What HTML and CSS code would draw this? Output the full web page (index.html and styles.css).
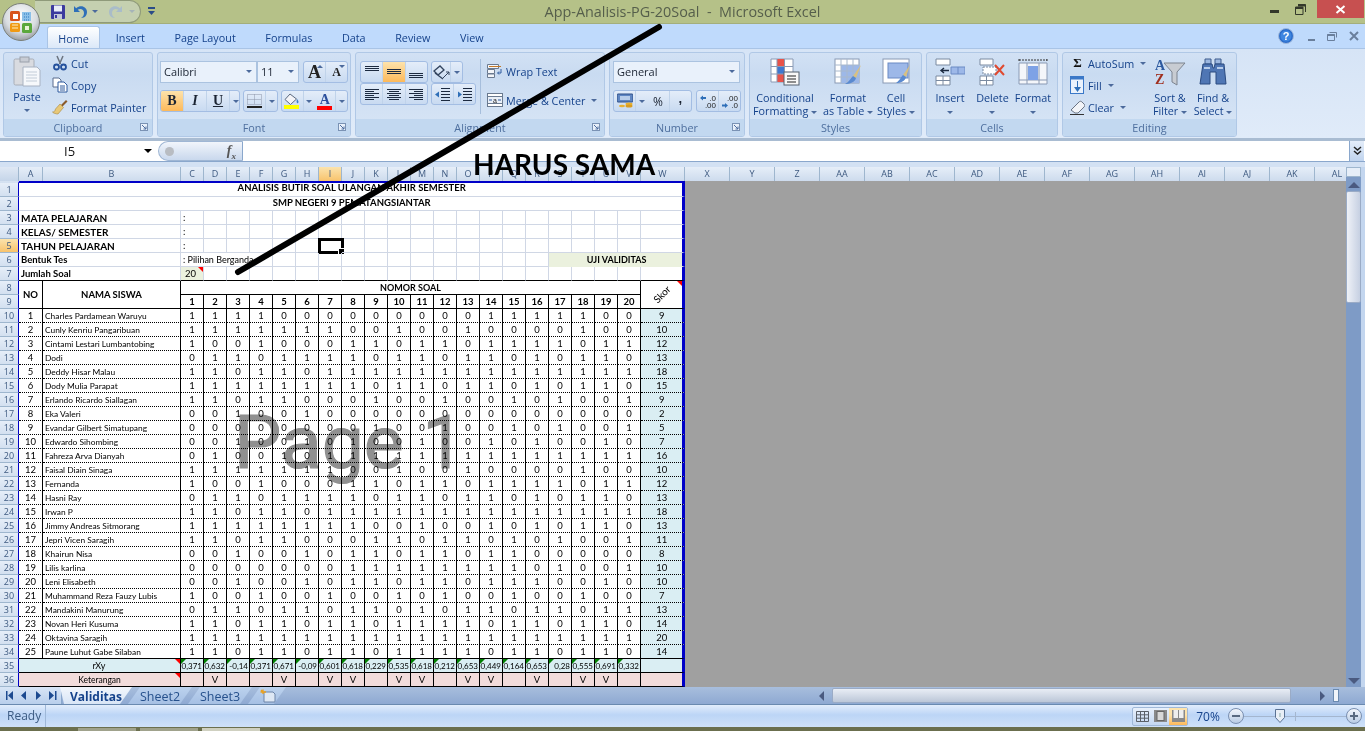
FILE: index.html
```html
<!DOCTYPE html>
<html lang="id">
<head>
    <meta charset="UTF-8">
    <title>App-Analisis-PG-20Soal - Microsoft Excel</title>
    <link rel="stylesheet" href="styles.css">
</head>
<body>
<div class="window">
    <!-- Title bar -->
    <div class="titlebar">
        <div class="qat">
            <svg class="qat-ic" width="16" height="16" viewBox="0 0 16 16"><rect x="1" y="1" width="14" height="14" rx="1" fill="#3c3a9e"/><rect x="4" y="1.500" width="8" height="6" fill="#e8ecf8"/><rect x="4" y="10" width="8" height="5" fill="#c4c8d8"/><rect x="5" y="11" width="2" height="3" fill="#3c3a9e"/></svg>
            <svg class="qat-ic undo" width="16" height="16" viewBox="0 0 16 16"><path d="M2 2v6h6L5.800 5.800C8 4 12 5 12 9c0 2-1 4-3 5 4 0 6-3 6-6C15 3 9 0 4.200 4.200z" fill="#2f6fb8"/></svg>
            <span class="caret qat-caret"></span>
            <svg class="qat-ic redo" width="16" height="16" viewBox="0 0 16 16"><path d="M14 2v6H8l2.200-2.200C8 4 4 5 4 9c0 2 1 4 3 5-4 0-6-3-6-6C1 3 7 0 11.800 4.200z" fill="#a9bcc9"/></svg>
            <span class="caret qat-caret grey"></span>
        </div>
        <svg class="qat-more" width="7" height="9" viewBox="0 0 7 9"><rect x="0" y="0" width="7" height="2" fill="#2a4c88"/><path d="M0 4h7L3.500 8z" fill="#2a4c88"/></svg>
        <div class="title-text">App-Analisis-PG-20Soal&nbsp; -&nbsp; Microsoft Excel</div>
        <div class="win-controls">
            <span class="win-min"></span>
            <svg class="win-restore" width="11" height="11" viewBox="0 0 11 11"><path d="M3 .5h7.500V8M.5 3h7.500v7.500H.5z" fill="none" stroke="#33382a"/><path d="M3 1.500h7.500M.5 4h7.500" stroke="#33382a" stroke-width="2"/></svg>
            <span class="win-close"><svg width="11" height="9" viewBox="0 0 11 9"><path d="M1.500 1l8 7M9.500 1l-8 7" stroke="#fff" stroke-width="2"/></svg></span>
        </div>
    </div>

    <!-- Ribbon tabs -->
    <div class="tabs">
        <div class="tab tab-home">Home</div>
        <div class="tab">Insert</div>
        <div class="tab">Page Layout</div>
        <div class="tab">Formulas</div>
        <div class="tab">Data</div>
        <div class="tab">Review</div>
        <div class="tab">View</div>
        <div class="tabs-right">
            <svg width="16" height="16" viewBox="0 0 16 16"><circle cx="8" cy="8" r="7.500" fill="#2d6ecb" stroke="#9fb8dc"/><circle cx="8" cy="8" r="5.500" fill="#3f86e0"/><text x="8" y="12" text-anchor="middle" class="help-q">?</text></svg>
            <span class="mini-min"></span>
            <svg width="10" height="9" viewBox="0 0 10 9"><path d="M2.500 .5h7v5M.5 2.500h7v6h-7z" fill="none" stroke="#6a7f9c"/><path d="M.5 3h7" stroke="#6a7f9c" stroke-width="2"/></svg>
            <svg width="10" height="10" viewBox="0 0 10 10"><path d="M1 1l8 8M9 1l-8 8" stroke="#6a7f9c" stroke-width="2"/></svg>
        </div>
    </div>

    <!-- Ribbon -->
    <div class="ribbon">
        <div class="group g-clip">
            <div class="group-body">
                <div class="paste">
                    <svg width="28" height="31" viewBox="0 0 28 31"><rect x="1" y="3" width="20" height="26" rx="1.500" fill="#d9dbe0" stroke="#a8aeb8"/><rect x="7" y="1" width="9" height="5" fill="#c8ccd4" stroke="#9aa0aa"/><path d="M10 11h14l3 3v16H10z" fill="#f6f8fb" stroke="#a8b2c2"/><path d="M13 16h11M13 19h11M13 22h11M13 25h11" stroke="#c2ccd8"/></svg>
                    <span class="paste-label">Paste</span>
                    <span class="caret"></span>
                </div>
                <div class="small-col">
                    <div class="small-row"><svg width="16" height="16" viewBox="0 0 16 16"><path d="M5 1l3.500 8M11 1L7.500 9" stroke="#6c7480" stroke-width="1.500" fill="none"/><circle cx="4.500" cy="12" r="2.500" fill="none" stroke="#24509c" stroke-width="1.800"/><circle cx="11.500" cy="12" r="2.500" fill="none" stroke="#24509c" stroke-width="1.800"/></svg><span>Cut</span></div>
                    <div class="small-row"><svg width="16" height="16" viewBox="0 0 16 16"><path d="M1 1h6l2 2v7H1z" fill="#fff" stroke="#5a6d8e"/><path d="M6 5h6l3 3v7H6z" fill="#fff" stroke="#2f5a9e"/><path d="M8 9h5M8 11h5M8 13h5" stroke="#2f5a9e"/></svg><span>Copy</span></div>
                    <div class="small-row"><svg width="16" height="16" viewBox="0 0 16 16"><path d="M9 6l5-5 1.500 1.500-5 5z" fill="#8a5a2a"/><path d="M8 5l3.500 3.500L6 15c-2 0-5-1-5.500-2 2 0 2.500-1 3-3z" fill="#e8c878" stroke="#a8883c" stroke-width=".6"/></svg><span>Format Painter</span></div>
                </div>
            </div>
            <div class="group-label">Clipboard<svg class="launcher" width="8" height="8" viewBox="0 0 8 8"><rect x=".5" y=".5" width="7" height="7" fill="#e8f0fa" stroke="#7a92b4"/><path d="M2 2l4 4M6 3.500V6H3.500" stroke="#4d6d9f" fill="none"/></svg></div>
        </div>

        <div class="group g-font">
            <div class="group-body rows">
                <div class="row">
                    <div class="select font-name">Calibri<span class="caret"></span></div>
                    <div class="select font-size">11<span class="caret"></span></div>
                    <div class="btn-group grow"><span class="btn big-a">A<i class="caret up"></i></span><span class="btn small-a">A<i class="caret"></i></span></div>
                </div>
                <div class="row">
                    <div class="btn-group biu"><span class="btn on ft-b">B</span><span class="btn ft-i">I</span><span class="btn ft-u">U</span><span class="btn tiny"><i class="caret"></i></span></div>
                    <div class="btn-group border-btn">
                        <span class="btn"><svg width="15" height="14" viewBox="0 0 15 14"><path d="M.5.500h14v10H.5zM7.500.5v10M.5 5.500h14" fill="none" stroke="#8a93a6" stroke-dasharray="1 1"/><rect y="12" width="15" height="2" fill="#222"/></svg></span><span class="btn tiny"><i class="caret"></i></span>
                    </div>
                    <div class="btn-group colors">
                        <span class="btn"><svg width="16" height="16" viewBox="0 0 16 16"><path d="M6 1L1 6.500 6.500 11.500 12.500 6z" fill="#f4f4f8" stroke="#5b6a80"/><path d="M13 6c1.500 2 2 3 1 4s-2-1-1-4z" fill="#3f7fc9"/><rect y="12" width="15" height="4" fill="#ffff00"/></svg></span><span class="btn tiny"><i class="caret"></i></span>
                        <span class="btn color-a">A<b></b></span><span class="btn tiny"><i class="caret"></i></span>
                    </div>
                </div>
            </div>
            <div class="group-label">Font<svg class="launcher" width="8" height="8" viewBox="0 0 8 8"><rect x=".5" y=".5" width="7" height="7" fill="#e8f0fa" stroke="#7a92b4"/><path d="M2 2l4 4M6 3.500V6H3.500" stroke="#4d6d9f" fill="none"/></svg></div>
        </div>

        <div class="group g-align">
            <div class="group-body">
                <div class="rows align-rows">
                    <div class="row">
                        <div class="btn-group third">
                            <span class="btn"><svg width="14" height="12" viewBox="0 0 14 12"><path d="M0 .5h14M0 2.500h14M0 4.500h14" stroke="#1c2a40"/></svg></span>
                            <span class="btn on"><svg width="14" height="12" viewBox="0 0 14 12"><path d="M0 3.500h14M0 5.500h14M0 7.500h14" stroke="#1c2a40"/></svg></span>
                            <span class="btn"><svg width="14" height="12" viewBox="0 0 14 12"><path d="M0 7.500h14M0 9.500h14M0 11.500h14" stroke="#1c2a40"/></svg></span>
                        </div>
                        <div class="btn-group orient">
                            <span class="btn"><svg width="17" height="15" viewBox="0 0 17 15"><path d="M1 6l6-5 4 4-6 5zM2 8l8 6" fill="none" stroke="#33445e" stroke-width="1.300"/><path d="M10 13l6-6M13 7h3v3" fill="none" stroke="#33445e"/></svg></span><span class="btn tiny"><i class="caret"></i></span>
                        </div>
                    </div>
                    <div class="row">
                        <div class="btn-group third">
                            <span class="btn"><svg width="14" height="11" viewBox="0 0 14 11"><path d="M0 .5h14M0 2.500h9M0 4.500h14M0 6.500h9M0 8.500h14M0 10.500h9" stroke="#1c2a40"/></svg></span>
                            <span class="btn"><svg width="14" height="11" viewBox="0 0 14 11"><path d="M0 .5h14M2 2.500h10M0 4.500h14M2 6.500h10M0 8.500h14M2 10.500h10" stroke="#1c2a40"/></svg></span>
                            <span class="btn"><svg width="14" height="11" viewBox="0 0 14 11"><path d="M0 .5h14M5 2.500h9M0 4.500h14M5 6.500h9M0 8.500h14M5 10.500h9" stroke="#1c2a40"/></svg></span>
                        </div>
                        <div class="btn-group indent">
                            <span class="btn"><svg width="16" height="13" viewBox="0 0 16 13"><path d="M6 .5h9M6 3.500h9M6 6.500h9M6 9.500h9M6 12.500h9" stroke="#1c2a40"/><path d="M0 6.500l4-3v6z" fill="#2f6fb8"/></svg></span>
                            <span class="btn"><svg width="16" height="13" viewBox="0 0 16 13"><path d="M6 .5h9M6 3.500h9M6 6.500h9M6 9.500h9M6 12.500h9" stroke="#1c2a40"/><path d="M5 6.500l-4-3v6z" fill="#2f6fb8"/></svg></span>
                        </div>
                    </div>
                </div>
                <div class="align-sep"></div>
                <div class="wrap-col">
                    <div class="small-row"><svg width="16" height="14" viewBox="0 0 16 14"><path d="M.5.500h11v4H.5zM.5 5.500h7v4h-7zM.5 10h7v3.500h-7z" fill="#f4f6fa" stroke="#6a7a90"/><path d="M2 2.500h12" stroke="#c47a2a"/><path d="M14 5v4h-3M12 7.500L10.500 9l1.500 1.500" fill="none" stroke="#2f5a9e"/></svg><span>Wrap Text</span></div>
                    <div class="small-row"><svg width="16" height="14" viewBox="0 0 16 14"><rect x=".5" y=".5" width="15" height="3" fill="#fff" stroke="#6a7a90"/><rect x=".5" y="10.500" width="15" height="3" fill="#fff" stroke="#6a7a90"/><rect x=".5" y="3.500" width="15" height="7" fill="#eaf0f8" stroke="#6a7a90"/><path d="M2 7h3M14 7h-3" stroke="#2f5a9e"/><text x="8" y="9.500" text-anchor="middle" class="merge-a">a</text></svg><span>Merge &amp; Center</span><i class="caret"></i></div>
                </div>
            </div>
            <div class="group-label">Alignment<svg class="launcher" width="8" height="8" viewBox="0 0 8 8"><rect x=".5" y=".5" width="7" height="7" fill="#e8f0fa" stroke="#7a92b4"/><path d="M2 2l4 4M6 3.500V6H3.500" stroke="#4d6d9f" fill="none"/></svg></div>
        </div>

        <div class="group g-number">
            <div class="group-body rows">
                <div class="row"><div class="select num-format">General<span class="caret"></span></div></div>
                <div class="row">
                    <div class="btn-group num-btns">
                        <span class="btn money"><svg width="16" height="16" viewBox="0 0 16 16"><rect y="1" width="16" height="8" rx="1" fill="#5f86c2" stroke="#2f4f88"/><rect x="3" y="3" width="10" height="4" fill="#b8cdea"/><ellipse cx="12" cy="11" rx="3.500" ry="1.500" fill="#e8b030"/><ellipse cx="12" cy="13" rx="3.500" ry="1.500" fill="#d89c20"/><ellipse cx="5" cy="13" rx="3" ry="1.300" fill="#e8b030"/></svg></span><span class="btn tiny"><i class="caret"></i></span>
                        <span class="btn pct">%</span><span class="btn comma">,</span>
                    </div>
                    <div class="btn-group dec-btns">
                        <span class="btn dec"><svg width="16" height="15" viewBox="0 0 16 15"><text x="16" y="7" text-anchor="end" class="dec-t">.0</text><text x="16" y="14" text-anchor="end" class="dec-t">.00</text><path d="M0 4l3-2.500V3h3v2H3v1.500z" fill="#2f6fb8"/></svg></span>
                        <span class="btn dec"><svg width="16" height="15" viewBox="0 0 16 15"><text x="16" y="7" text-anchor="end" class="dec-t">.00</text><text x="16" y="14" text-anchor="end" class="dec-t">.0</text><path d="M6 11.500l-3-2.500v1.500H0v2h3V14z" fill="#2f6fb8"/></svg></span>
                    </div>
                </div>
            </div>
            <div class="group-label">Number<svg class="launcher" width="8" height="8" viewBox="0 0 8 8"><rect x=".5" y=".5" width="7" height="7" fill="#e8f0fa" stroke="#7a92b4"/><path d="M2 2l4 4M6 3.500V6H3.500" stroke="#4d6d9f" fill="none"/></svg></div>
        </div>

        <div class="group g-styles">
            <div class="group-body">
                <div class="big w70">
                    <svg width="30" height="28" viewBox="0 0 30 28"><path d="M1 1h22v23H1z" fill="#fff" stroke="#8a9ab4"/><rect x="7" y="1" width="7" height="8" fill="#e8534a"/><rect x="7" y="9" width="8" height="7" fill="#3f78d0"/><rect x="7" y="16" width="7" height="8" fill="#e8534a"/><path d="M7 1v23M14.500 1v23M1 8.500h22M1 16h22" stroke="#8a9ab4" fill="none"/><rect x="14" y="14" width="15" height="13" fill="#f8f8f8" stroke="#55606f"/><path d="M17 18h9M17 21h9M17 24h9" stroke="#222"/></svg>
                    <span class="big-label">Conditional<br>Formatting <i class="caret"></i></span>
                </div>
                <div class="big w56">
                    <svg width="30" height="28" viewBox="0 0 30 28"><rect x="2" y="1" width="24" height="24" fill="#fff" stroke="#8a9ab4"/><rect x="8" y="7" width="18" height="18" fill="#9db8e8"/><path d="M8 1v24M14 1v24M20 1v24M2 7h24M2 13h24M2 19h24" stroke="#a8b8cc"/><path d="M28 7L20 18l3 2z" fill="#d8c080"/><path d="M20 18c-2 2-4 6-8 8 5 0 10-2 11-6z" fill="#5a8ad0"/></svg>
                    <span class="big-label">Format<br>as Table <i class="caret"></i></span>
                </div>
                <div class="big w40">
                    <svg width="30" height="28" viewBox="0 0 30 28"><rect x="2" y="1" width="26" height="24" fill="#fff" stroke="#8a9ab4"/><rect x="7" y="5" width="20" height="15" fill="#9db8e8" stroke="#6a8ac4"/><path d="M29 7l-7 10 3 2z" fill="#d8c080"/><path d="M22 17c-2 2-3 5-7 8 5 0 9-2 10-6z" fill="#5a8ad0"/></svg>
                    <span class="big-label">Cell<br>Styles <i class="caret"></i></span>
                </div>
            </div>
            <div class="group-label">Styles</div>
        </div>

        <div class="group g-cells">
            <div class="group-body">
                <div class="big w46">
                    <svg width="30" height="28" viewBox="0 0 30 28"><path d="M1 1h14v6H1zM1 18h14v9H1zM8 18v9M1 22.500h14" fill="#fff" stroke="#7a8aa0"/><path d="M16 9h14v7H16z" fill="#9db8e8" stroke="#6a8ac4"/><path d="M23 9v7" stroke="#6a8ac4"/><path d="M14 12.500H6M9 10L6 12.500 9 15" fill="none" stroke="#1c2a40" stroke-width="1.400"/></svg>
                    <span class="big-label">Insert<br><i class="caret"></i></span>
                </div>
                <div class="big w39">
                    <svg width="30" height="28" viewBox="0 0 30 28"><path d="M2 1h13v6H2zM2 18h13v9H2zM8.500 18v9M2 22.500h13" fill="#fff" stroke="#7a8aa0"/><path d="M5 9h13v7H5z" fill="#fff" stroke="#7a8aa0" stroke-dasharray="2 1"/><path d="M17 7l9 10M26 7l-9 10" stroke="#e04a30" stroke-width="2"/></svg>
                    <span class="big-label">Delete<br><i class="caret"></i></span>
                </div>
                <div class="big w42">
                    <svg width="30" height="28" viewBox="0 0 30 28"><path d="M1 3V1M29 3V1M1 2h28" stroke="#333" stroke-dasharray="2 1"/><path d="M1 5h28v21H1z" fill="#f4f6fa" stroke="#8a9ab4"/><path d="M9 5v21M21 5v21M1 22h28" stroke="#8a9ab4"/><rect x="10" y="8" width="10" height="14" fill="#7ea2e6"/></svg>
                    <span class="big-label">Format<br><i class="caret"></i></span>
                </div>
            </div>
            <div class="group-label">Cells</div>
        </div>

        <div class="group g-edit">
            <div class="group-body">
                <div class="small-col edit-col">
                    <div class="small-row"><span class="sigma">&Sigma;</span><span>AutoSum</span><i class="caret"></i></div>
                    <div class="small-row"><svg width="15" height="18" viewBox="0 0 15 18"><rect x=".5" y=".5" width="13" height="17" fill="#eaf2fc" stroke="#3a78c8"/><rect x=".5" y=".5" width="13" height="3" fill="#3a78c8"/><path d="M7 5v6H4l3.500 5 3.500-5H8V5z" fill="#2f6fb8"/></svg><span>Fill</span><i class="caret"></i></div>
                    <div class="small-row"><svg width="15" height="15" viewBox="0 0 15 15"><path d="M1 10l8-8c1-1 2-1 3 0l2 2c1 1 1 2 0 3l-6 6H5z" fill="#f2f4f8" stroke="#6a7484"/><path d="M0 14.500h14" stroke="#333"/></svg><span>Clear</span><i class="caret"></i></div>
                </div>
                <div class="big w46">
                    <svg width="32" height="28" viewBox="0 0 32 28"><text x="1" y="12" class="az-a">A</text><text x="1" y="26" class="az-z">Z</text><path d="M10 5h21l-8 9v13l-5-3V14z" fill="#c8ccd2" stroke="#7c8490"/></svg>
                    <span class="big-label">Sort &amp;<br>Filter <i class="caret"></i></span>
                </div>
                <div class="big w40">
                    <svg width="30" height="28" viewBox="0 0 30 28"><path d="M7 1h6v5H7zM17 1h6v5h-6z" fill="#9db8e0" stroke="#3c5a8c"/><path d="M5 6h9l1 4h1l1-4h9l2 20H18V14h-6v12H2z" fill="#4f76b4" stroke="#2a4a80"/><path d="M6 10h6M19 10h6" stroke="#b8cdea" stroke-width="2"/></svg>
                    <span class="big-label">Find &amp;<br>Select <i class="caret"></i></span>
                </div>
            </div>
            <div class="group-label">Editing</div>
        </div>
    </div>

    <!-- Formula bar -->
    <div class="formula">
        <div class="name-box"><span>I5</span><span class="caret dark"></span></div>
        <div class="fx-pill"><i class="fx-dot"></i><span class="fx">f<sub>x</sub></span></div>
        <div class="formula-input"></div>
        <div class="formula-expand"><svg width="9" height="10" viewBox="0 0 9 10"><path d="M1 1l3.500 3L8 1M1 5l3.500 3L8 5" fill="none" stroke="#222" stroke-width="1.500"/></svg></div>
    </div>

    <!-- Sheet -->
    <div class="sheet-area">
        <div class="sheet-main">
            <div class="col-heads">
                <span class="corner"></span>
                <span class="ch w24">A</span><span class="ch w138">B</span>
                <span class="ch">C</span><span class="ch">D</span><span class="ch">E</span><span class="ch">F</span><span class="ch">G</span><span class="ch">H</span><span class="ch on">I</span><span class="ch">J</span><span class="ch">K</span><span class="ch">L</span><span class="ch">M</span><span class="ch">N</span><span class="ch">O</span><span class="ch">P</span><span class="ch">Q</span><span class="ch">R</span><span class="ch">S</span><span class="ch">T</span><span class="ch">U</span><span class="ch">V</span>
                <span class="ch w44">W</span>
                <span class="ch w45">X</span><span class="ch w45">Y</span><span class="ch w45">Z</span><span class="ch w45">AA</span><span class="ch w45">AB</span><span class="ch w45">AC</span><span class="ch w45">AD</span><span class="ch w45">AE</span><span class="ch w45">AF</span><span class="ch w45">AG</span><span class="ch w45">AH</span><span class="ch w45">AI</span><span class="ch w45">AJ</span><span class="ch w45">AK</span><span class="ch w45">AL</span>
            </div>
            <table class="grid">
                <colgroup>
                    <col class="c-rh"><col class="c-a"><col class="c-b">
                    <col class="c-n"><col class="c-n"><col class="c-n"><col class="c-n"><col class="c-n"><col class="c-n"><col class="c-n"><col class="c-n"><col class="c-n"><col class="c-n"><col class="c-n"><col class="c-n"><col class="c-n"><col class="c-n"><col class="c-n"><col class="c-n"><col class="c-n"><col class="c-n"><col class="c-n"><col class="c-n">
                    <col class="c-w">
                </colgroup>
                <tr class="top r1"><th>1</th><td colspan="23" class="head">ANALISIS BUTIR SOAL ULANGAN AKHIR SEMESTER</td></tr>
                <tr class="top r2"><th>2</th><td colspan="23" class="head">SMP NEGERI 9 PEMATANGSIANTAR</td></tr>
                <tr class="top"><th>3</th><td colspan="2" class="lbl lbl-cap">MATA PELAJARAN</td><td>:</td><td></td><td></td><td></td><td></td><td></td><td></td><td></td><td></td><td></td><td></td><td></td><td></td><td></td><td></td><td></td><td></td><td></td><td></td><td></td><td></td></tr>
                <tr class="top"><th>4</th><td colspan="2" class="lbl lbl-cap">KELAS/ SEMESTER</td><td>:</td><td></td><td></td><td></td><td></td><td></td><td></td><td></td><td></td><td></td><td></td><td></td><td></td><td></td><td></td><td></td><td></td><td></td><td></td><td></td><td></td></tr>
                <tr class="top"><th class="on">5</th><td colspan="2" class="lbl lbl-cap">TAHUN PELAJARAN</td><td>:</td><td></td><td></td><td></td><td></td><td></td><td class="sel"><span class="sel-box"></span></td><td></td><td></td><td></td><td></td><td></td><td></td><td></td><td></td><td></td><td></td><td></td><td></td><td></td><td></td></tr>
                <tr class="top"><th>6</th><td colspan="2" class="lbl">Bentuk Tes</td><td colspan="4" class="bentuk">: Pilihan Berganda</td><td></td><td></td><td></td><td></td><td></td><td></td><td></td><td></td><td></td><td></td><td></td><td></td><td colspan="5" class="uji">UJI VALIDITAS</td></tr>
                <tr class="top last"><th>7</th><td colspan="2" class="lbl">Jumlah Soal</td><td class="soal">20<i class="tri-red"></i></td><td></td><td></td><td></td><td></td><td></td><td></td><td></td><td></td><td></td><td></td><td></td><td></td><td></td><td></td><td></td><td></td><td></td><td></td><td></td><td></td></tr>
                <tr class="hd"><th>8</th><td rowspan="2">NO</td><td rowspan="2">NAMA SISWA</td><td colspan="20" class="nomor">NOMOR SOAL</td><td rowspan="2" class="skor"><span>Skor</span><i class="tri-red"></i></td></tr>
                <tr class="hd"><th>9</th><td>1</td><td>2</td><td>3</td><td>4</td><td>5</td><td>6</td><td>7</td><td>8</td><td>9</td><td>10</td><td>11</td><td>12</td><td>13</td><td>14</td><td>15</td><td>16</td><td>17</td><td>18</td><td>19</td><td>20</td></tr>
                <tr class="dt"><th>10</th><td>1</td><td class="nm">Charles Pardamean Waruyu</td><td>1</td><td>1</td><td>1</td><td>1</td><td>0</td><td>0</td><td>0</td><td>0</td><td>0</td><td>0</td><td>0</td><td>0</td><td>0</td><td>1</td><td>1</td><td>1</td><td>1</td><td>1</td><td>0</td><td>0</td><td class="sk">9</td></tr>
                <tr class="dt"><th>11</th><td>2</td><td class="nm">Cunly Kenriu Pangaribuan</td><td>1</td><td>1</td><td>1</td><td>1</td><td>1</td><td>1</td><td>1</td><td>0</td><td>0</td><td>1</td><td>0</td><td>0</td><td>1</td><td>0</td><td>0</td><td>0</td><td>0</td><td>1</td><td>0</td><td>0</td><td class="sk">10</td></tr>
                <tr class="dt"><th>12</th><td>3</td><td class="nm">Cintami Lestari Lumbantobing</td><td>1</td><td>0</td><td>0</td><td>1</td><td>0</td><td>0</td><td>0</td><td>1</td><td>1</td><td>0</td><td>1</td><td>1</td><td>0</td><td>1</td><td>1</td><td>1</td><td>1</td><td>0</td><td>1</td><td>1</td><td class="sk">12</td></tr>
                <tr class="dt"><th>13</th><td>4</td><td class="nm">Dodi</td><td>0</td><td>1</td><td>1</td><td>0</td><td>1</td><td>1</td><td>1</td><td>1</td><td>0</td><td>1</td><td>1</td><td>0</td><td>1</td><td>1</td><td>0</td><td>1</td><td>0</td><td>1</td><td>1</td><td>0</td><td class="sk">13</td></tr>
                <tr class="dt"><th>14</th><td>5</td><td class="nm">Deddy Hisar Malau</td><td>1</td><td>1</td><td>0</td><td>1</td><td>1</td><td>0</td><td>1</td><td>1</td><td>1</td><td>1</td><td>1</td><td>1</td><td>1</td><td>1</td><td>1</td><td>1</td><td>1</td><td>1</td><td>1</td><td>1</td><td class="sk">18</td></tr>
                <tr class="dt"><th>15</th><td>6</td><td class="nm">Dody Mulia Parapat</td><td>1</td><td>1</td><td>1</td><td>1</td><td>1</td><td>1</td><td>1</td><td>1</td><td>0</td><td>1</td><td>1</td><td>0</td><td>1</td><td>1</td><td>0</td><td>1</td><td>0</td><td>1</td><td>1</td><td>0</td><td class="sk">15</td></tr>
                <tr class="dt"><th>16</th><td>7</td><td class="nm">Erlando Ricardo Siallagan</td><td>1</td><td>1</td><td>0</td><td>1</td><td>1</td><td>0</td><td>0</td><td>0</td><td>1</td><td>0</td><td>0</td><td>1</td><td>0</td><td>0</td><td>1</td><td>0</td><td>1</td><td>0</td><td>0</td><td>1</td><td class="sk">9</td></tr>
                <tr class="dt"><th>17</th><td>8</td><td class="nm">Eka Valeri</td><td>0</td><td>0</td><td>1</td><td>0</td><td>0</td><td>1</td><td>0</td><td>0</td><td>0</td><td>0</td><td>0</td><td>0</td><td>0</td><td>0</td><td>0</td><td>0</td><td>0</td><td>0</td><td>0</td><td>0</td><td class="sk">2</td></tr>
                <tr class="dt"><th>18</th><td>9</td><td class="nm">Evandar Gilbert Simatupang</td><td>0</td><td>0</td><td>0</td><td>0</td><td>0</td><td>0</td><td>0</td><td>0</td><td>1</td><td>0</td><td>0</td><td>1</td><td>0</td><td>0</td><td>1</td><td>0</td><td>1</td><td>0</td><td>0</td><td>1</td><td class="sk">5</td></tr>
                <tr class="dt"><th>19</th><td>10</td><td class="nm">Edwardo Sihombing</td><td>0</td><td>0</td><td>1</td><td>0</td><td>0</td><td>1</td><td>0</td><td>1</td><td>0</td><td>0</td><td>1</td><td>0</td><td>0</td><td>1</td><td>0</td><td>1</td><td>0</td><td>0</td><td>1</td><td>0</td><td class="sk">7</td></tr>
                <tr class="dt"><th>20</th><td>11</td><td class="nm">Fahreza Arva Dianyah</td><td>0</td><td>1</td><td>0</td><td>0</td><td>1</td><td>0</td><td>1</td><td>1</td><td>1</td><td>1</td><td>1</td><td>1</td><td>1</td><td>1</td><td>1</td><td>1</td><td>1</td><td>1</td><td>1</td><td>1</td><td class="sk">16</td></tr>
                <tr class="dt"><th>21</th><td>12</td><td class="nm">Faisal Diain Sinaga</td><td>1</td><td>1</td><td>1</td><td>1</td><td>1</td><td>1</td><td>1</td><td>0</td><td>0</td><td>1</td><td>0</td><td>0</td><td>1</td><td>0</td><td>0</td><td>0</td><td>0</td><td>1</td><td>0</td><td>0</td><td class="sk">10</td></tr>
                <tr class="dt"><th>22</th><td>13</td><td class="nm">Fernanda</td><td>1</td><td>0</td><td>0</td><td>1</td><td>0</td><td>0</td><td>0</td><td>1</td><td>1</td><td>0</td><td>1</td><td>1</td><td>0</td><td>1</td><td>1</td><td>1</td><td>1</td><td>0</td><td>1</td><td>1</td><td class="sk">12</td></tr>
                <tr class="dt"><th>23</th><td>14</td><td class="nm">Hasni Ray</td><td>0</td><td>1</td><td>1</td><td>0</td><td>1</td><td>1</td><td>1</td><td>1</td><td>0</td><td>1</td><td>1</td><td>0</td><td>1</td><td>1</td><td>0</td><td>1</td><td>0</td><td>1</td><td>1</td><td>0</td><td class="sk">13</td></tr>
                <tr class="dt"><th>24</th><td>15</td><td class="nm">Irwan P</td><td>1</td><td>1</td><td>0</td><td>1</td><td>1</td><td>0</td><td>1</td><td>1</td><td>1</td><td>1</td><td>1</td><td>1</td><td>1</td><td>1</td><td>1</td><td>1</td><td>1</td><td>1</td><td>1</td><td>1</td><td class="sk">18</td></tr>
                <tr class="dt"><th>25</th><td>16</td><td class="nm">Jimmy Andreas Sitmorang</td><td>1</td><td>1</td><td>1</td><td>1</td><td>1</td><td>1</td><td>1</td><td>1</td><td>0</td><td>0</td><td>1</td><td>0</td><td>0</td><td>1</td><td>0</td><td>1</td><td>0</td><td>1</td><td>1</td><td>0</td><td class="sk">13</td></tr>
                <tr class="dt"><th>26</th><td>17</td><td class="nm">Jepri Vicen Saragih</td><td>1</td><td>1</td><td>0</td><td>1</td><td>1</td><td>0</td><td>0</td><td>0</td><td>1</td><td>1</td><td>0</td><td>1</td><td>1</td><td>0</td><td>1</td><td>0</td><td>1</td><td>0</td><td>0</td><td>1</td><td class="sk">11</td></tr>
                <tr class="dt"><th>27</th><td>18</td><td class="nm">Khairun Nisa</td><td>0</td><td>0</td><td>1</td><td>0</td><td>0</td><td>1</td><td>0</td><td>1</td><td>1</td><td>0</td><td>1</td><td>1</td><td>0</td><td>1</td><td>1</td><td>0</td><td>0</td><td>0</td><td>0</td><td>0</td><td class="sk">8</td></tr>
                <tr class="dt"><th>28</th><td>19</td><td class="nm">Lilis karlina</td><td>0</td><td>0</td><td>0</td><td>0</td><td>0</td><td>0</td><td>0</td><td>1</td><td>1</td><td>1</td><td>1</td><td>1</td><td>1</td><td>1</td><td>1</td><td>0</td><td>1</td><td>0</td><td>0</td><td>1</td><td class="sk">10</td></tr>
                <tr class="dt"><th>29</th><td>20</td><td class="nm">Leni Elisabeth</td><td>0</td><td>0</td><td>1</td><td>0</td><td>0</td><td>1</td><td>0</td><td>1</td><td>1</td><td>0</td><td>1</td><td>1</td><td>0</td><td>1</td><td>1</td><td>1</td><td>0</td><td>0</td><td>1</td><td>0</td><td class="sk">10</td></tr>
                <tr class="dt"><th>30</th><td>21</td><td class="nm">Muhammand Reza Fauzy Lubis</td><td>1</td><td>0</td><td>0</td><td>1</td><td>0</td><td>0</td><td>1</td><td>0</td><td>0</td><td>1</td><td>0</td><td>1</td><td>0</td><td>0</td><td>1</td><td>0</td><td>0</td><td>1</td><td>0</td><td>0</td><td class="sk">7</td></tr>
                <tr class="dt"><th>31</th><td>22</td><td class="nm">Mandakini Manurung</td><td>0</td><td>1</td><td>1</td><td>0</td><td>1</td><td>1</td><td>0</td><td>1</td><td>1</td><td>0</td><td>1</td><td>0</td><td>1</td><td>1</td><td>0</td><td>1</td><td>1</td><td>0</td><td>1</td><td>1</td><td class="sk">13</td></tr>
                <tr class="dt"><th>32</th><td>23</td><td class="nm">Novan Heri Kusuma</td><td>1</td><td>1</td><td>0</td><td>1</td><td>1</td><td>0</td><td>1</td><td>1</td><td>0</td><td>1</td><td>1</td><td>1</td><td>1</td><td>0</td><td>1</td><td>1</td><td>0</td><td>1</td><td>1</td><td>0</td><td class="sk">14</td></tr>
                <tr class="dt"><th>33</th><td>24</td><td class="nm">Oktavina Saragih</td><td>1</td><td>1</td><td>1</td><td>1</td><td>1</td><td>1</td><td>1</td><td>1</td><td>1</td><td>1</td><td>1</td><td>1</td><td>1</td><td>1</td><td>1</td><td>1</td><td>1</td><td>1</td><td>1</td><td>1</td><td class="sk">20</td></tr>
                <tr class="dt lastdt"><th>34</th><td>25</td><td class="nm">Paune Luhut Gabe Silaban</td><td>1</td><td>1</td><td>0</td><td>1</td><td>1</td><td>0</td><td>1</td><td>1</td><td>0</td><td>1</td><td>1</td><td>1</td><td>1</td><td>0</td><td>1</td><td>1</td><td>0</td><td>1</td><td>1</td><td>0</td><td class="sk">14</td></tr>
                <tr class="rxy"><th>35</th><td colspan="2">rXy<i class="tri-red"></i></td><td><i class="tri-green"></i>0,371</td><td><i class="tri-green"></i>0,632</td><td><i class="tri-green"></i>-0,14</td><td><i class="tri-green"></i>0,371</td><td><i class="tri-green"></i>0,671</td><td><i class="tri-green"></i>-0,09</td><td><i class="tri-green"></i>0,601</td><td><i class="tri-green"></i>0,618</td><td><i class="tri-green"></i>0,229</td><td><i class="tri-green"></i>0,535</td><td><i class="tri-green"></i>0,618</td><td><i class="tri-green"></i>0,212</td><td><i class="tri-green"></i>0,653</td><td><i class="tri-green"></i>0,449</td><td><i class="tri-green"></i>0,164</td><td><i class="tri-green"></i>0,653</td><td><i class="tri-green"></i>0,28</td><td><i class="tri-green"></i>0,555</td><td><i class="tri-green"></i>0,691</td><td><i class="tri-green"></i>0,332</td><td></td></tr>
                <tr class="ket"><th>36</th><td colspan="2">Keterangan<i class="tri-red"></i></td><td></td><td>V</td><td></td><td></td><td>V</td><td></td><td>V</td><td>V</td><td></td><td>V</td><td>V</td><td></td><td>V</td><td>V</td><td></td><td>V</td><td></td><td>V</td><td>V</td><td></td><td></td></tr>
            </table>
        </div>
        <div class="vscroll">
            <span class="split-v"></span>
            <span class="arrow-up"></span>
            <span class="thumb-v"></span>
            <span class="arrow-down"></span>
        </div>
    </div>

    <!-- Sheet tabs and horizontal scrollbar -->
    <div class="sheet-tabs">
        <div class="tab-nav">
            <svg width="60" height="12" viewBox="0 0 60 12"><path d="M6 1h1.500v9H6zM13 1v9L8 5.500zM26 1v9l-5-4.500zM36 1v9l5-4.500zM49 1v9l5-4.500zM55 1h1.500v9H55z" fill="#1d4a90"/></svg>
        </div>
        <div class="stab stab-on">Validitas</div>
        <div class="stab">Sheet2</div>
        <div class="stab">Sheet3</div>
        <div class="stab stab-new"><svg width="16" height="14" viewBox="0 0 16 14"><path d="M4 3h9l2 2v8H4z" fill="#dde7f4" stroke="#6c84a8"/><path d="M4 4L1 1M3 .5V5M.5 3H6" stroke="#e8a020" stroke-width="1.300"/></svg></div>
        <div class="hscroll">
            <span class="arrow-left"></span>
            <span class="thumb-h"></span>
            <span class="arrow-right"></span>
            <span class="split-h"></span>
        </div>
    </div>

    <!-- Status bar -->
    <div class="status">
        <span class="ready">Ready</span>
        <div class="views">
            <span class="view"><svg width="13" height="11" viewBox="0 0 13 11"><path d="M.5.500h12v10H.5zM4.500.5v10M8.500.5v10M.5 3.800h12M.5 7.200h12" fill="none" stroke="#5a6068"/></svg></span>
            <span class="view"><svg width="13" height="12" viewBox="0 0 13 12"><rect width="13" height="12" fill="#8a8a8a"/><rect x="3" y="1.500" width="7" height="9" fill="#d8d8d8" stroke="#666"/></svg></span>
            <span class="view view-on"><svg width="13" height="12" viewBox="0 0 13 12"><rect width="13" height="12" fill="#8a8a8a"/><rect x="1.500" y="0" width="4.500" height="8" fill="#eee"/><rect x="7" y="0" width="4.500" height="8" fill="#eee"/></svg></span>
        </div>
        <span class="zoom-val">70%</span>
        <div class="zoom-btn"><b></b></div>
        <div class="zoom-track"><svg class="zoom-knob" width="10" height="14" viewBox="0 0 10 14"><path d="M.5.500h9v8L5 13.500.5 8.500z" fill="#e8eef6" stroke="#5a7294"/><path d="M5 4v4" stroke="#8aa"/></svg><i class="zoom-tick"></i></div>
        <div class="zoom-btn plus"><b></b></div>
    </div>

    <!-- Desktop strip under the window -->
    <div class="desktop"><span></span><span></span><span></span></div>

    <!-- Things lying over the window -->
    <div class="office-btn">
        <svg width="38" height="38" viewBox="0 0 38 38">
            <defs><radialGradient id="orb" cx=".5" cy=".35" r=".7"><stop offset="0" stop-color="#fff"/><stop offset=".6" stop-color="#d8dce0"/><stop offset="1" stop-color="#8c9096"/></radialGradient></defs>
            <circle cx="19" cy="19" r="18.500" fill="url(#orb)" stroke="#7a7f78"/>
            <rect x="8" y="8" width="10" height="10" rx="1.500" fill="#d8541c"/><rect x="11" y="11" width="5" height="5" fill="#fff"/>
            <rect x="20" y="9" width="9" height="9" fill="#8cc0e8"/><path d="M22 11h5M22 14h5M22 17h5" stroke="#2a78c0" stroke-dasharray="1 1"/>
            <rect x="8" y="20" width="10" height="9" rx="1.500" fill="#f09a14"/><path d="M10 22h6M10 25h6" stroke="#fff0c0"/>
            <rect x="20" y="20" width="10" height="10" rx="1.500" fill="#5aa83c"/><rect x="23" y="23" width="4" height="4" fill="#e8f4d8"/>
        </svg>
    </div>
    <div class="note">HARUS SAMA</div>
    <div class="watermark">Page 1</div>
    <svg class="slash" width="1365" height="731" viewBox="0 0 1365 731"><line x1="659" y1="27" x2="238" y2="272" stroke="#000" stroke-width="6" stroke-linecap="round"/></svg>
</div>
</body>
</html>
```

FILE: styles.css
```css
* {
    margin: 0;
    padding: 0;
    box-sizing: border-box;
}
body {
    background-color: #6b6f4e;
    overflow: hidden;
    font-family: "Open Sans", "Noto Sans", sans-serif;
}
i { font-style: normal; }
.window {
    position: relative;
    width: 1365px;
    height: 731px;
    display: flex;
    flex-direction: column;
    overflow: hidden;
}
.caret {
    display: inline-block;
    width: 0;
    height: 0;
    border-left: 3px solid transparent;
    border-right: 3px solid transparent;
    border-top: 3px solid #4c6a9c;
}
.caret.up {
    border-top: none;
    border-bottom: 3px solid #4c6a9c;
}
.caret.dark {
    border-left-width: 4px;
    border-right-width: 4px;
    border-top: 4px solid #000;
}

/* Title bar */
.titlebar {
    height: 24px;
    background-color: #b5c188;
    border-bottom: 1px solid #a3ae7c;
    display: flex;
    align-items: center;
    position: relative;
}
.qat {
    margin-left: 35px;
    width: 106px;
    height: 23px;
    background-color: #c5d0b0;
    border: 1px solid #8f9a7a;
    border-left: none;
    border-radius: 0 12px 12px 0;
    display: flex;
    align-items: center;
    padding-left: 15px;
}
.qat-ic.undo { margin-left: 6px; }
.qat-ic.redo { margin-left: 10px; }
.qat-caret { margin-left: 4px; }
.qat-caret.grey { margin-left: 5px; border-top-color: #a6b4b8; }
.qat-more { margin-left: 7px; }
.title-text {
    position: absolute;
    left: 0;
    right: 0;
    text-align: center;
    font-size: 14.400px;
    color: #555e4b;
    pointer-events: none;
}
.win-controls {
    margin-left: auto;
    display: flex;
    align-items: flex-start;
    height: 100%;
}
.win-min {
    width: 9px;
    height: 3px;
    background-color: #33382a;
    margin-top: 10px;
    margin-right: 16px;
}
.win-restore { margin-top: 4px; margin-right: 11px; }
.win-close {
    width: 47px;
    height: 18px;
    margin-right: 1px;
    background-color: #c75050;
    display: flex;
    align-items: center;
    justify-content: center;
}

/* Ribbon tabs */
.tabs {
    height: 24px;
    background-color: #bfdafc;
    display: flex;
    align-items: flex-end;
    padding-left: 47px;
    font-size: 10.800px;
    color: #15428b;
}
.tab {
    height: 22px;
    line-height: 23px;
    padding: 0 14.800px;
    text-align: center;
}
.tab-home {
    width: 53px;
    padding: 0;
    margin-right: 1px;
    background: linear-gradient(#fff, #dbe8f8);
    border: 1px solid #a9c4e6;
    border-bottom: none;
    border-radius: 3px 3px 0 0;
}
.tabs-right {
    margin-left: auto;
    align-self: center;
    display: flex;
    align-items: center;
    padding-right: 6px;
    gap: 12px;
}
.help-q {
    font-family: "Liberation Sans", sans-serif;
    font-size: 11px;
    font-weight: bold;
    fill: #fff;
}
.mini-min {
    width: 7px;
    height: 2px;
    margin-top: 7px;
    margin-left: 2px;
    background-color: #6a7f9c;
}

/* Ribbon */
.ribbon {
    height: 93px;
    padding: 3px 0 0 3px;
    display: flex;
    gap: 4px;
    background: linear-gradient(#d6e4f6, #e0ebf9);
    border-top: 1px solid #a9c4e6;
    border-bottom: 3px solid #a9bcd2;
    font-size: 10.800px;
    color: #15428b;
}
.group {
    height: 85px;
    display: flex;
    flex-direction: column;
    border: 1px solid #b0c8e6;
    border-radius: 3px;
    background: linear-gradient(#d2e1f4, #c9dbf1 25%, #d9e6f6);
    overflow: hidden;
}
.group-body { flex: 1; display: flex; }
.group-label {
    height: 17px;
    line-height: 17px;
    background-color: #c2d8f0;
    text-align: center;
    color: #4e6f9e;
    position: relative;
}
.launcher { position: absolute; right: 4px; top: 4px; }
.g-clip { width: 150px; }
.g-font { width: 194px; }
.g-align { width: 250px; }
.g-number { width: 136px; }
.g-styles { width: 173px; }
.g-cells { width: 132px; }
.g-edit { width: 175px; }

.paste {
    width: 46px;
    padding-top: 3px;
    display: flex;
    flex-direction: column;
    align-items: center;
}
.paste-label { margin-top: 3px; line-height: 14px; }
.paste .caret { margin-top: 5px; }
.small-col {
    margin-top: -1px;
    padding: 0 0 0 2px;
    display: flex;
    flex-direction: column;
}
.small-row {
    height: 22px;
    display: flex;
    align-items: center;
    gap: 3px;
    white-space: nowrap;
}
.small-row .caret { margin-left: 3px; }

.rows {
    flex-direction: column;
    padding: 8px 0 0 2px;
    gap: 7px;
}
.row { display: flex; gap: 3px; height: 22px; }
.select {
    height: 22px;
    background-color: #e9f1fb;
    border: 1px solid #abc3e0;
    display: flex;
    align-items: center;
    justify-content: space-between;
    padding: 0 4px 1px 3px;
    color: #1b2433;
    font-family: "Open Sans", sans-serif;
    font-size: 11px;
}
.font-name { width: 97px; }
.font-size { width: 42px; margin-left: -3px; margin-right: 1px; }
.btn-group {
    height: 22px;
    display: flex;
    border: 1px solid #a3bde3;
    border-radius: 3px;
    background: linear-gradient(#e4edf9, #c8daf1);
    overflow: hidden;
}
.btn {
    flex: 1;
    display: flex;
    align-items: center;
    justify-content: center;
    border-right: 1px solid #c0d3ea;
    color: #1b2433;
    position: relative;
}
.btn:last-child { border-right: none; }
.btn.tiny { flex: 0 0 11px; border-right: none; }
.btn.on { background: linear-gradient(#fde3ac, #fdb95a); }
.grow { width: 45px; }
.big-a, .small-a {
    font-family: "Liberation Serif", serif;
    font-weight: bold;
    color: #222;
}
.big-a { font-size: 18px; }
.small-a { font-size: 12px; }
.grow .caret { position: absolute; top: 3px; right: 2px; }
.biu { width: 80px; }
.biu .btn { flex: 0 0 23px; font-family: "Liberation Serif", serif; font-size: 14px; font-weight: bold; }
.biu .btn.tiny { flex: 0 0 11px; }
.ft-i { font-style: italic; }
.ft-u { text-decoration: underline; }
.border-btn { width: 35px; }
.colors { width: 67px; }
.color-a {
    flex-direction: column;
    font-family: "Liberation Serif", serif;
    font-size: 14px;
    font-weight: bold;
    color: #2b4f9c;
    line-height: 13px;
}
.color-a b {
    width: 15px;
    height: 4px;
    background-color: #f00;
}

.align-rows { padding-left: 4px; width: 124px; }
.third { width: 68px; }
.orient { width: 32px; }
.indent { width: 45px; }
.align-sep {
    width: 1px;
    height: 55px;
    margin-top: 6px;
    background-color: #a6bedc;
}
.wrap-col {
    padding: 7px 0 0 6px;
    display: flex;
    flex-direction: column;
    gap: 7px;
}
.merge-a { font-family: "Liberation Sans", sans-serif; font-size: 7px; fill: #222; }
.num-format { width: 127px; margin-left: 1px; }
.num-btns { width: 79px; margin-left: 1px; }
.dec-btns { width: 45px; margin-left: 1px; }
.pct { font-size: 12px; }
.comma { font-family: "Liberation Sans", sans-serif; font-weight: bold; font-size: 13px; padding-bottom: 5px; }
.dec-t { font-family: "Liberation Sans", sans-serif; font-size: 8px; fill: #222; }

.big {
    padding-top: 5px;
    display: flex;
    flex-direction: column;
    align-items: center;
    text-align: center;
}
.big svg { flex: none; }
.big-label {
    margin-top: 5px;
    line-height: 13px;
    white-space: nowrap;
}
.big-label .caret { vertical-align: middle; }
.w70 { width: 70px; }
.w56 { width: 56px; }
.w40 { width: 40px; }
.w46 { width: 46px; }
.w39 { width: 39px; }
.w42 { width: 42px; }
.edit-col { width: 84px; padding-left: 7px; }
.sigma { font-family: "Liberation Serif", serif; width: 15px; text-align: center; font-weight: bold; color: #111; font-size: 13px; }
.az-a { font-family: "Liberation Serif", serif; font-size: 14px; fill: #2d5aa0; font-weight: bold; }
.az-z { font-family: "Liberation Serif", serif; font-size: 14px; fill: #a03020; font-weight: bold; }

/* Formula bar */
.formula {
    height: 21px;
    background-color: #fff;
    border-bottom: 1px solid #8aa7cc;
    display: flex;
    align-items: stretch;
}
.name-box {
    width: 158px;
    display: flex;
    align-items: center;
    justify-content: space-between;
    font-family: "Open Sans", sans-serif;
    font-size: 13px;
    color: #111;
    padding: 0 6px 0 64px;
}
.fx-pill {
    width: 85px;
    background: linear-gradient(#f1f5fb, #c9d8ed);
    border: 1px solid #9fb6d4;
    border-right: 1px solid #8aa7cc;
    border-radius: 10px 0 0 10px;
    position: relative;
}
.fx-dot {
    position: absolute;
    left: 6px;
    top: 5px;
    width: 9px;
    height: 9px;
    border-radius: 50%;
    background-color: #b8bcc2;
}
.fx {
    position: absolute;
    right: 6px;
    top: 1px;
    font-family: "Liberation Serif", serif;
    font-style: italic;
    font-weight: bold;
    font-size: 14px;
    color: #555;
    line-height: 16px;
}
.fx sub { font-size: 9px; }
.formula-input { flex: 1; }
.formula-expand {
    width: 15px;
    margin-right: 1px;
    background: linear-gradient(#e4edf9, #c0d4ee);
    border-left: 1px solid #8aa7cc;
    display: flex;
    align-items: center;
    justify-content: center;
}

/* Sheet */
.sheet-area {
    height: 525px;
    padding-top: 5px;
    display: flex;
    background-color: #d3e1f3;
}
.sheet-main {
    flex: 1;
    min-width: 0;
    background-color: #a0a0a0;
    overflow: hidden;
}
.col-heads {
    display: flex;
    height: 14px;
    background-color: #d3e1f3;
}
.corner {
    flex: none;
    width: 19px;
    background: linear-gradient(#dfe8f4, #c5d5e9);
    border-right: 1px solid #9eb6ce;
}
.ch {
    flex: none;
    width: 23px;
    font-family: "Open Sans", sans-serif;
    font-size: 9px;
    line-height: 14px;
    text-align: center;
    color: #3e5a80;
    background: linear-gradient(#e6eef8, #cddbed);
    border-right: 1px solid #9eb6ce;
}
.ch.on { background: linear-gradient(#fbe3ad, #f8c36c); }
.w24 { width: 24px; }
.w138 { width: 138px; }
.w44 { width: 44px; }
.w45 { width: 45px; }

.grid {
    table-layout: fixed;
    width: 685px;
    border-collapse: separate;
    border-spacing: 0;
    font-family: Lato, "Open Sans", sans-serif;
    font-size: 9.500px;
    line-height: 12px;
    color: #000;
    background-color: #fff;
}
.c-rh { width: 19px; }
.c-a { width: 24px; }
.c-b { width: 138px; }
.c-n { width: 23px; }
.c-w { width: 44px; }
.grid tr { height: 14px; }
.grid td {
    height: 14px;
    padding: 0;
    overflow: visible;
    white-space: nowrap;
    text-align: center;
    position: relative;
    border-right: 1px solid #000;
    border-bottom: 1px solid #000;
}
.grid td:last-child { border-right: 3px solid #0000c8; }
.grid th {
    font-family: "Open Sans", sans-serif;
    font-size: 9px;
    font-weight: normal;
    color: #3e5a80;
    background: linear-gradient(#e6eef8, #d3e0f0);
    border-right: 1px solid #0000c8;
    border-bottom: 1px solid #9eb6ce;
}
.grid th.on { background: linear-gradient(#fbe3ad, #f8c36c); }
.grid .top td {
    border-right-color: #d0d7e5;
    border-bottom-color: #d0d7e5;
    text-align: left;
    padding-left: 2px;
}
.grid .top td:last-child { border-right-color: #0000c8; }
.grid .top.last td { border-bottom-color: #000; }
.grid .r1 td, .grid .r1 th { height: 16px; border-top: 2px solid #0000c8; }
.grid .r1 th { border-top-color: transparent; }
.grid .top td.head {
    text-align: center;
    font-weight: bold;
    font-size: 9.500px;
    line-height: 9px;
}
.grid .r1 td.head { padding-bottom: 4px; }
.grid .r2 td.head { padding-bottom: 2px; }
.grid .top td.lbl { font-weight: bold; padding-left: 2px; border-right-color: #d0d7e5; }
.grid .top td.lbl-cap { font-size: 10px; }
.grid .top td.bentuk { font-size: 9px; }
.grid .top td.uji { background-color: #ebf1de; font-weight: bold; font-size: 9px; text-align: center; border-bottom-color: #ebf1de; }
.grid .top td.soal { background-color: #ebf1de; padding-left: 4px; }
.tri-red, .tri-green {
    position: absolute;
    top: 0;
    width: 0;
    height: 0;
}
.tri-red {
    right: 0;
    border-top: 5px solid #f00;
    border-left: 5px solid transparent;
}
.tri-green {
    left: 0;
    border-top: 5px solid #008000;
    border-right: 5px solid transparent;
}
.sel-box {
    position: absolute;
    left: -1px;
    top: -1px;
    width: 26px;
    height: 16px;
    border: 3px solid #000;
}
.sel-box::after {
    content: "";
    position: absolute;
    right: -4px;
    bottom: -4px;
    width: 5px;
    height: 5px;
    background-color: #000;
    border: 1px solid #fff;
}
.grid .hd td { font-weight: bold; }
.grid .hd td:last-child { border-right: 1px solid #000; }
.grid .hd td.skor { background-color: #fff; border-right: 3px solid #0000c8; }
.grid .hd td.nomor { font-size: 9px; }
.grid .hd .skor span {
    display: inline-block;
    transform: rotate(-45deg);
    font-weight: normal;
    font-size: 10px;
}
.grid .dt td { border-bottom: 1px dotted #000; }
.grid .dt.lastdt td { border-bottom: 1px solid #000; }
.grid td.nm { text-align: left; padding-left: 2px; font-size: 8.400px; }
.grid td.sk { background-color: #daeef3; }
.grid .rxy td { background-color: #daeef3; font-size: 8px; text-align: right; padding-right: 1px; }
.grid .rxy td:first-of-type { text-align: center; font-size: 9px; }
.grid .ket td { background-color: #f2dcdb; }
.grid .ket td:first-of-type { font-size: 8.500px; }

.vscroll {
    flex: none;
    width: 19px;
    background-color: #7e9bc6;
    border-right: 4px solid #c3d6ef;
    display: flex;
    flex-direction: column;
    align-items: center;
}
.split-v {
    width: 15px;
    height: 10px;
    background-color: #e6eef8;
    border: 1px solid #9eb6ce;
}
.arrow-up {
    margin-top: 5px;
    border-left: 6px solid transparent;
    border-right: 6px solid transparent;
    border-bottom: 6px solid #4a5a80;
}
.thumb-v {
    width: 15px;
    height: 112px;
    margin-top: 3px;
    background: linear-gradient(90deg, #eef1f7, #c6d0e2);
    border: 1px solid #9aabc6;
    border-radius: 2px;
}
.arrow-down {
    margin-top: auto;
    margin-bottom: 3px;
    border-left: 6px solid transparent;
    border-right: 6px solid transparent;
    border-top: 6px solid #4a5a80;
}

/* Sheet tabs */
.sheet-tabs {
    height: 18px;
    display: flex;
    background: linear-gradient(#a8bedd, #8ea9d2);
    border-bottom: 1px solid #6a8ab0;
}
.tab-nav {
    width: 62px;
    flex: none;
    display: flex;
    align-items: center;
    background: linear-gradient(#d8e5f6, #b9cfec);
    border-right: 1px solid #8aa7cc;
}
.stab {
    flex: none;
    width: 64px;
    margin-right: -4px;
    text-align: center;
    font-size: 12.500px;
    line-height: 20px;
    color: #25508c;
    background: linear-gradient(#bcd2ee, #a6c0e4);
    clip-path: polygon(12px 0, 100% 0, calc(100% - 12px) 100%, 0 100%);
}
.stab-on {
    width: 72px;
    margin-left: -2px;
    font-weight: bold;
    font-size: 12px;
    color: #15428b;
    background: linear-gradient(#f2f6fc, #d8e5f6);
    clip-path: polygon(0 0, 100% 0, calc(100% - 12px) 100%, 4px 100%);
}
.stab-new {
    width: 38px;
    padding-left: 12px;
    display: flex;
    align-items: center;
}
.hscroll {
    margin-left: auto;
    width: 548px;
    display: flex;
    align-items: center;
}
.arrow-left {
    margin-left: 2px;
    border-top: 5px solid transparent;
    border-bottom: 5px solid transparent;
    border-right: 5px solid #4a5a80;
}
.thumb-h {
    width: 459px;
    height: 15px;
    margin-left: 8px;
    background: linear-gradient(#e8edf5, #bcc7d8);
    border: 1px solid #9aabc6;
    border-radius: 2px;
}
.arrow-right {
    margin-left: 29px;
    border-top: 5px solid transparent;
    border-bottom: 5px solid transparent;
    border-left: 5px solid #4a5a80;
}
.split-h {
    width: 6px;
    height: 13px;
    margin-left: 8px;
    background-color: #f0f4fa;
    border: 1px solid #6a8ab0;
}

/* Status bar */
.status {
    height: 22px;
    display: flex;
    align-items: center;
    background: linear-gradient(#e2edfc, #bcd5f6 45%, #cfe1f9);
    font-size: 12px;
    color: #3b5a82;
}
.ready {
    width: 46px;
    height: 100%;
    line-height: 22px;
    padding-left: 7px;
    border-right: 1px solid #9fb8d8;
}
.views {
    margin-left: 1086px;
    width: 56px;
    height: 19px;
    display: flex;
    border: 1px solid #9fb8d8;
    border-radius: 2px;
    background: linear-gradient(#e8f0fb, #c4d8f2);
}
.view {
    flex: 1;
    display: flex;
    align-items: center;
    justify-content: center;
}
.view-on { background: linear-gradient(#fde3ac 40%, #fdb95a); }
.zoom-val {
    width: 40px;
    text-align: center;
    font-size: 12px;
    color: #15428b;
}
.zoom-btn {
    flex: none;
    width: 16px;
    height: 16px;
    border-radius: 50%;
    border: 1px solid #7a8fb0;
    background: linear-gradient(#f4f7fc, #b8cbe4);
    position: relative;
}
.zoom-btn b {
    position: absolute;
    left: 3px;
    top: 6px;
    width: 8px;
    height: 2px;
    background-color: #5a6a80;
}
.zoom-btn.plus b::after {
    content: "";
    position: absolute;
    left: 3px;
    top: -3px;
    width: 2px;
    height: 8px;
    background-color: #5a6a80;
}
.zoom-track {
    width: 102px;
    height: 1px;
    background-color: #a4b6cf;
    position: relative;
}
.zoom-knob { position: absolute; left: 31px; top: -7px; }
.zoom-tick {
    position: absolute;
    left: 51px;
    top: -4px;
    width: 1px;
    height: 9px;
    background-color: #a4b6cf;
}

/* Desktop strip */
.desktop {
    flex: 1;
    display: flex;
    align-items: flex-end;
    gap: 4px;
    padding-left: 78px;
    background-color: #6b6f4e;
}
.desktop span {
    width: 58px;
    height: 3px;
    background-color: #a0a28c;
}
.desktop span:nth-child(3) { background-color: #cfd0c0; }

/* Overlays */
.office-btn {
    position: absolute;
    left: 2px;
    top: 3px;
    width: 38px;
    height: 38px;
}
.note {
    position: absolute;
    left: 473px;
    top: 147px;
    font-family: Lato, "Open Sans", sans-serif;
    font-size: 28px;
    font-weight: 700;
    line-height: 34px;
    color: #000;
    white-space: nowrap;
}
.watermark {
    position: absolute;
    left: 234px;
    top: 400px;
    font-family: Roboto, "Liberation Sans", sans-serif;
    font-size: 75px;
    line-height: 84px;
    color: #909090;
    -webkit-text-stroke: 1.200px #909090;
    mix-blend-mode: multiply;
}
.slash { position: absolute; left: 0; top: 0; }
```
